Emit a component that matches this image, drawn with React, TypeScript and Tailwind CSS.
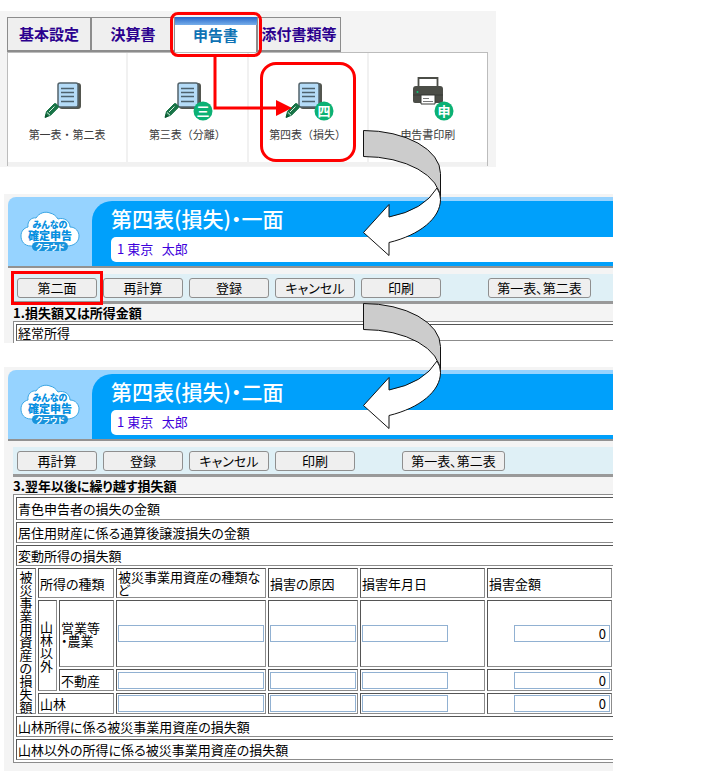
import type { ReactNode } from "react";

const jp = "font-['Noto_Sans_CJK_JP','Liberation_Sans',sans-serif]";

function DocumentIcon({ badge }: { badge?: string }) {
  return (
    <svg width="52" height="46" viewBox="0 0 52 46" aria-hidden="true">
      <rect x="18" y="3" width="22" height="26" rx="3" fill="#53564f" />
      <rect x="17" y="3" width="20" height="24" rx="2" fill="#b5dcf8" stroke="#53636b" strokeWidth="1.5" />
      <path d="M20 8.500h13M20 12.500h13M20 16.500h13M20 21.500h13" stroke="#4d626e" strokeWidth="1.5" />
      <path d="M4 37.500l1.500-6 7.500-7.500q1-1 2.200 0l1.800 1.800q1 1 0 2l-7.500 7.500z" fill="#187447" stroke="#187447" />
      <path d="M6 32.500l3 2.700M8 32l5.500-5.500" stroke="#d9eee1" strokeWidth="1" />
      <path d="M4 37.500l.8-3.200 2.200 2.400z" fill="#0b4d2c" />
      {badge && <Badge label={badge} />}
    </svg>
  );
}

function Badge({ label }: { label: string }) {
  return (
    <>
      <circle cx="42" cy="31" r="9.500" fill="#0bb174" />
      <text x="42" y="35.500" textAnchor="middle" fontSize="13" fontWeight="700" fill="#fff">
        {label}
      </text>
    </>
  );
}

function PrinterIcon() {
  return (
    <svg width="52" height="46" viewBox="0 0 52 46" className="overflow-visible" aria-hidden="true">
      <path d="M16.500 7v-9h19v9" fill="#fff" stroke="#4b4d47" strokeWidth="1.800" />
      <path d="M14 6h24q3 0 3 3v12q0 2-2 2H13q-2 0-2-2V9q0-3 3-3z" fill="#4b4d47" />
      <path d="M11 15h30" stroke="#393b36" strokeWidth="1" />
      <circle cx="15.500" cy="12" r="1" fill="#11c476" />
      <path d="M19 15h14v9H19z" fill="#fff" stroke="#393b36" />
      <path d="M21 18.500h6M21 21.500h10" stroke="#777" strokeWidth="1" />
      <Badge label="申" />
    </svg>
  );
}

function CloudLogo() {
  return (
    <svg width="60" height="44" viewBox="0 0 60 44" role="img" aria-label="みんなの確定申告クラウド">
      <path
        d="M11 36C4 36 1 31 1 26c0-5 3-8 7-9-1-6 4-10 8-9C19 3 25 1 30 3c4 1 6 3 8 6 6-2 12 2 12 8 6 0 9 5 9 9 0 6-5 10-12 10z"
        fill="#fff"
        stroke="#3ba6e4"
        strokeWidth="1"
      />
      <text x="30" y="18" textAnchor="middle" fontSize="9" fontWeight="900" fill="#078fe0">みんなの</text>
      <text x="30" y="30" textAnchor="middle" fontSize="11" fontWeight="900" fill="#078fe0">確定申告</text>
      <rect x="12" y="32" width="36" height="9" rx="4.500" fill="#1893dc" />
      <text x="30" y="39.500" textAnchor="middle" fontSize="8" fontWeight="700" fill="#fff">クラウド</text>
    </svg>
  );
}

function CurvedArrow() {
  return (
    <svg width="80" height="127" viewBox="0 0 80 127" stroke="#111" strokeWidth="1" aria-hidden="true">
      <path d="M.5 .5A77 43 0 0 1 77.500 43.500V69.500A77 43 0 0 0 .5 26.500z" fill="#ccc" />
      <path d="M74 58Q61 80 26 87V74.500L.5 102.500 26 125.500V112.500C57 105 77.500 88 77.500 69.500Q77.500 63 74 58z" fill="#fff" />
    </svg>
  );
}

function Tab({ label }: { label: string }) {
  return (
    <button className="h-[35px] flex-1 border border-b-2 border-[#8c8c8c] bg-[#efefef] text-[15px] font-bold whitespace-nowrap text-[#2b008e]">
      {label}
    </button>
  );
}

function Tile({ label, icon, children }: { label: string; icon: ReactNode; children?: ReactNode }) {
  return (
    <div className="relative flex h-[113px] flex-1 flex-col items-center border-r-2 border-b-4 border-[#f1f1f1] pt-[27px] last:border-r-0">
      {icon}
      <span className="text-[11px] leading-4 whitespace-nowrap text-[#3c3c3c]">{label}</span>
      {children}
    </div>
  );
}

function MenuSection() {
  return (
    <section className="relative h-[156px] max-w-[496px] bg-[#f4f4f4] pt-[6px] pr-2 pl-[7px] [font-feature-settings:normal]">
      <nav className="flex w-[334px]">
        <Tab label="基本設定" />
        <Tab label="決算書" />
        <div className="relative flex-1">
          <div className="absolute inset-x-0 top-0 h-2 bg-linear-to-b from-[#2566c8] to-[#77aeea]" />
          <button className="h-[35px] w-full border-r border-[#8c8c8c] bg-white pt-px text-[15px] font-bold text-[#0f72b4]">
            申告書
          </button>
          <div className="absolute -inset-[5px] z-20 rounded-lg border-3 border-[#f00]" />
        </div>
        <Tab label="添付書類等" />
      </nav>
      <div className="flex border border-b-0 border-[#bcbcbc] bg-white">
        <Tile label="第一表・第二表" icon={<DocumentIcon />} />
        <Tile label="第三表（分離）" icon={<DocumentIcon badge="三" />} />
        <Tile label="第四表（損失）" icon={<DocumentIcon badge="四" />}>
          <div className="absolute inset-x-[11px] top-[9px] bottom-0 rounded-[16px] border-3 border-[#f00]" />
        </Tile>
        <Tile label="申告書印刷" icon={<PrinterIcon />} />
      </div>
      <svg className="absolute top-[46px] left-[212px]" width="80" height="64" viewBox="0 0 80 64" aria-hidden="true">
        <path d="M3 0V51H66" fill="none" stroke="#f00" strokeWidth="3" />
        <path d="M64 43l16 8-16 8z" fill="#f00" />
      </svg>
    </section>
  );
}

function ToolButton({ label, wide = false }: { label: string; wide?: boolean }) {
  return (
    <button
      className={`h-5 shrink-0 rounded-[3px] border border-[#8f8f8f] bg-[#efefef] text-[13px] leading-4 whitespace-nowrap text-black ${
        wide ? "ml-[41px] w-[103px]" : "w-20"
      }`}
    >
      {label}
    </button>
  );
}

function FormHeader({ title }: { title: string }) {
  return (
    <header className="flex rounded-tl-lg border-b-2 border-[#929292] bg-[#96d3ff] pt-1">
      <div className="flex w-[84px] shrink-0 justify-center pt-[9px]">
        <CloudLogo />
      </div>
      <div className="min-w-0 flex-1 rounded-tl-[20px] bg-[#00a0fb] pb-1 pl-[19px]">
        <h1 className="h-9 pt-px text-[21px] leading-8 font-medium text-white">{title}</h1>
        <p className="h-[25px] rounded-l-[5px] bg-white pl-[6px] text-[13px] leading-6 whitespace-pre text-[#3d00db]">
          1 東京&nbsp;&nbsp; 太郎
        </p>
      </div>
    </header>
  );
}

function Toolbar({ children }: { children: ReactNode }) {
  return (
    <div className="mt-[6px] ml-[5px] flex h-[30px] gap-[6px] border-b-3 border-[#999] bg-[#dff0f6] pt-1 pl-1">
      {children}
    </div>
  );
}

const cell =
  "border border-t-[#555] border-l-[#555] border-r-[#8c8c8c] border-b-[#8c8c8c] bg-white px-px align-middle font-normal text-left";
const field =
  "block h-[17px] border border-[#91b1d2] bg-white px-[3px] text-[13px] leading-[15px] font-normal text-black outline-none";

function FullRow({ label, height }: { label: string; height: string }) {
  return (
    <tr className={height}>
      <td colSpan={8} className={`${cell} whitespace-nowrap`}>{label}</td>
    </tr>
  );
}

function DamageFields({ name }: { name: string }) {
  return (
    <>
      <td className={cell}>
        <input aria-label={`${name} 被災事業用資産の種類など`} className={`${field} w-[146px]`} />
      </td>
      <td className={cell}>
        <input aria-label={`${name} 損害の原因`} className={`${field} w-[86px]`} />
      </td>
      <td className={cell}>
        <input aria-label={`${name} 損害年月日`} className={`${field} w-[86px]`} />
      </td>
      <td className={cell}>
        <input aria-label={`${name} 損害金額`} defaultValue="0" className={`${field} ml-auto w-24 text-right`} />
      </td>
    </>
  );
}

const tableClass =
  "ml-[5px] w-[640px] table-fixed border-separate border-spacing-[2px] border border-[#8c8c8c] bg-white text-[13px] leading-[13px] text-black";

export default function App() {
  return (
    <main className={`${jp} relative overflow-hidden bg-white pt-[11px] pb-2 [font-feature-settings:'palt']`}>
      <MenuSection />

      <section className="mt-[27px] ml-1 h-[149px] max-w-[609px] overflow-hidden bg-[#f4f4f4] pt-[3px] pl-1">
        <FormHeader title="第四表(損失)・一面" />
        <Toolbar>
          <div className="relative flex h-5 shrink-0">
            <ToolButton label="第二面" />
            <div className="absolute -inset-x-[6px] -inset-y-[7px] border-3 border-[#f00]" />
          </div>
          <ToolButton label="再計算" />
          <ToolButton label="登録" />
          <ToolButton label="キャンセル" />
          <ToolButton label="印刷" />
          <ToolButton label="第一表、第二表" wide />
        </Toolbar>
        <h2 className="h-[17px] pl-[5px] text-[13px] leading-[18px] font-bold text-black">1.損失額又は所得金額</h2>
        <table className={tableClass}>
          <tbody>
            <tr className="h-[17px]">
              <td className={cell}>経常所得</td>
            </tr>
          </tbody>
        </table>
      </section>

      <section className="mt-6 ml-1 max-w-[609px] overflow-hidden bg-[#f4f4f4] pt-[3px] pb-2 pl-1">
        <FormHeader title="第四表(損失)・二面" />
        <Toolbar>
          <ToolButton label="再計算" />
          <ToolButton label="登録" />
          <ToolButton label="キャンセル" />
          <ToolButton label="印刷" />
          <ToolButton label="第一表、第二表" wide />
        </Toolbar>
        <h2 className="h-[17px] pl-[5px] text-[13px] leading-[18px] font-bold text-black">3.翌年以後に繰り越す損失額</h2>
        <table className={tableClass}>
          <colgroup>
            <col className="w-5" />
            <col className="w-[19px]" />
            <col className="w-[55px]" />
            <col className="w-[150px]" />
            <col className="w-[90px]" />
            <col className="w-[125px]" />
            <col className="w-[125px]" />
            <col />
          </colgroup>
          <tbody>
            <FullRow label="青色申告者の損失の金額" height="h-[23px]" />
            <FullRow label="居住用財産に係る通算後譲渡損失の金額" height="h-[21px]" />
            <FullRow label="変動所得の損失額" height="h-[21px]" />
            <tr className="h-[30px]">
              <th rowSpan={4} className={`${cell} break-all`}>
                <span className="mx-auto block w-[13px]">被災事業用資産の損失額</span>
              </th>
              <th colSpan={2} className={cell}>所得の種類</th>
              <th className={`${cell} break-all`}>被災事業用資産の種類など</th>
              <th className={cell}>損害の原因</th>
              <th className={cell}>損害年月日</th>
              <th className={cell}>損害金額</th>
            </tr>
            <tr className="h-[67px]">
              <th rowSpan={2} className={cell}>
                <span className="block w-[13px]">山林以外</span>
              </th>
              <th className={cell}>
                営業等
                <br />
                ・農業
              </th>
              <DamageFields name="営業等・農業" />
            </tr>
            <tr className="h-[22px]">
              <th className={cell}>不動産</th>
              <DamageFields name="不動産" />
            </tr>
            <tr className="h-[21px]">
              <th colSpan={2} className={cell}>山林</th>
              <DamageFields name="山林" />
            </tr>
            <FullRow label="山林所得に係る被災事業用資産の損失額" height="h-[21px]" />
            <FullRow label="山林以外の所得に係る被災事業用資産の損失額" height="h-[21px]" />
          </tbody>
        </table>
      </section>

      <div className="absolute top-[130px] left-[363px]">
        <CurvedArrow />
      </div>
      <div className="absolute top-[303px] left-[363px]">
        <CurvedArrow />
      </div>
    </main>
  );
}
